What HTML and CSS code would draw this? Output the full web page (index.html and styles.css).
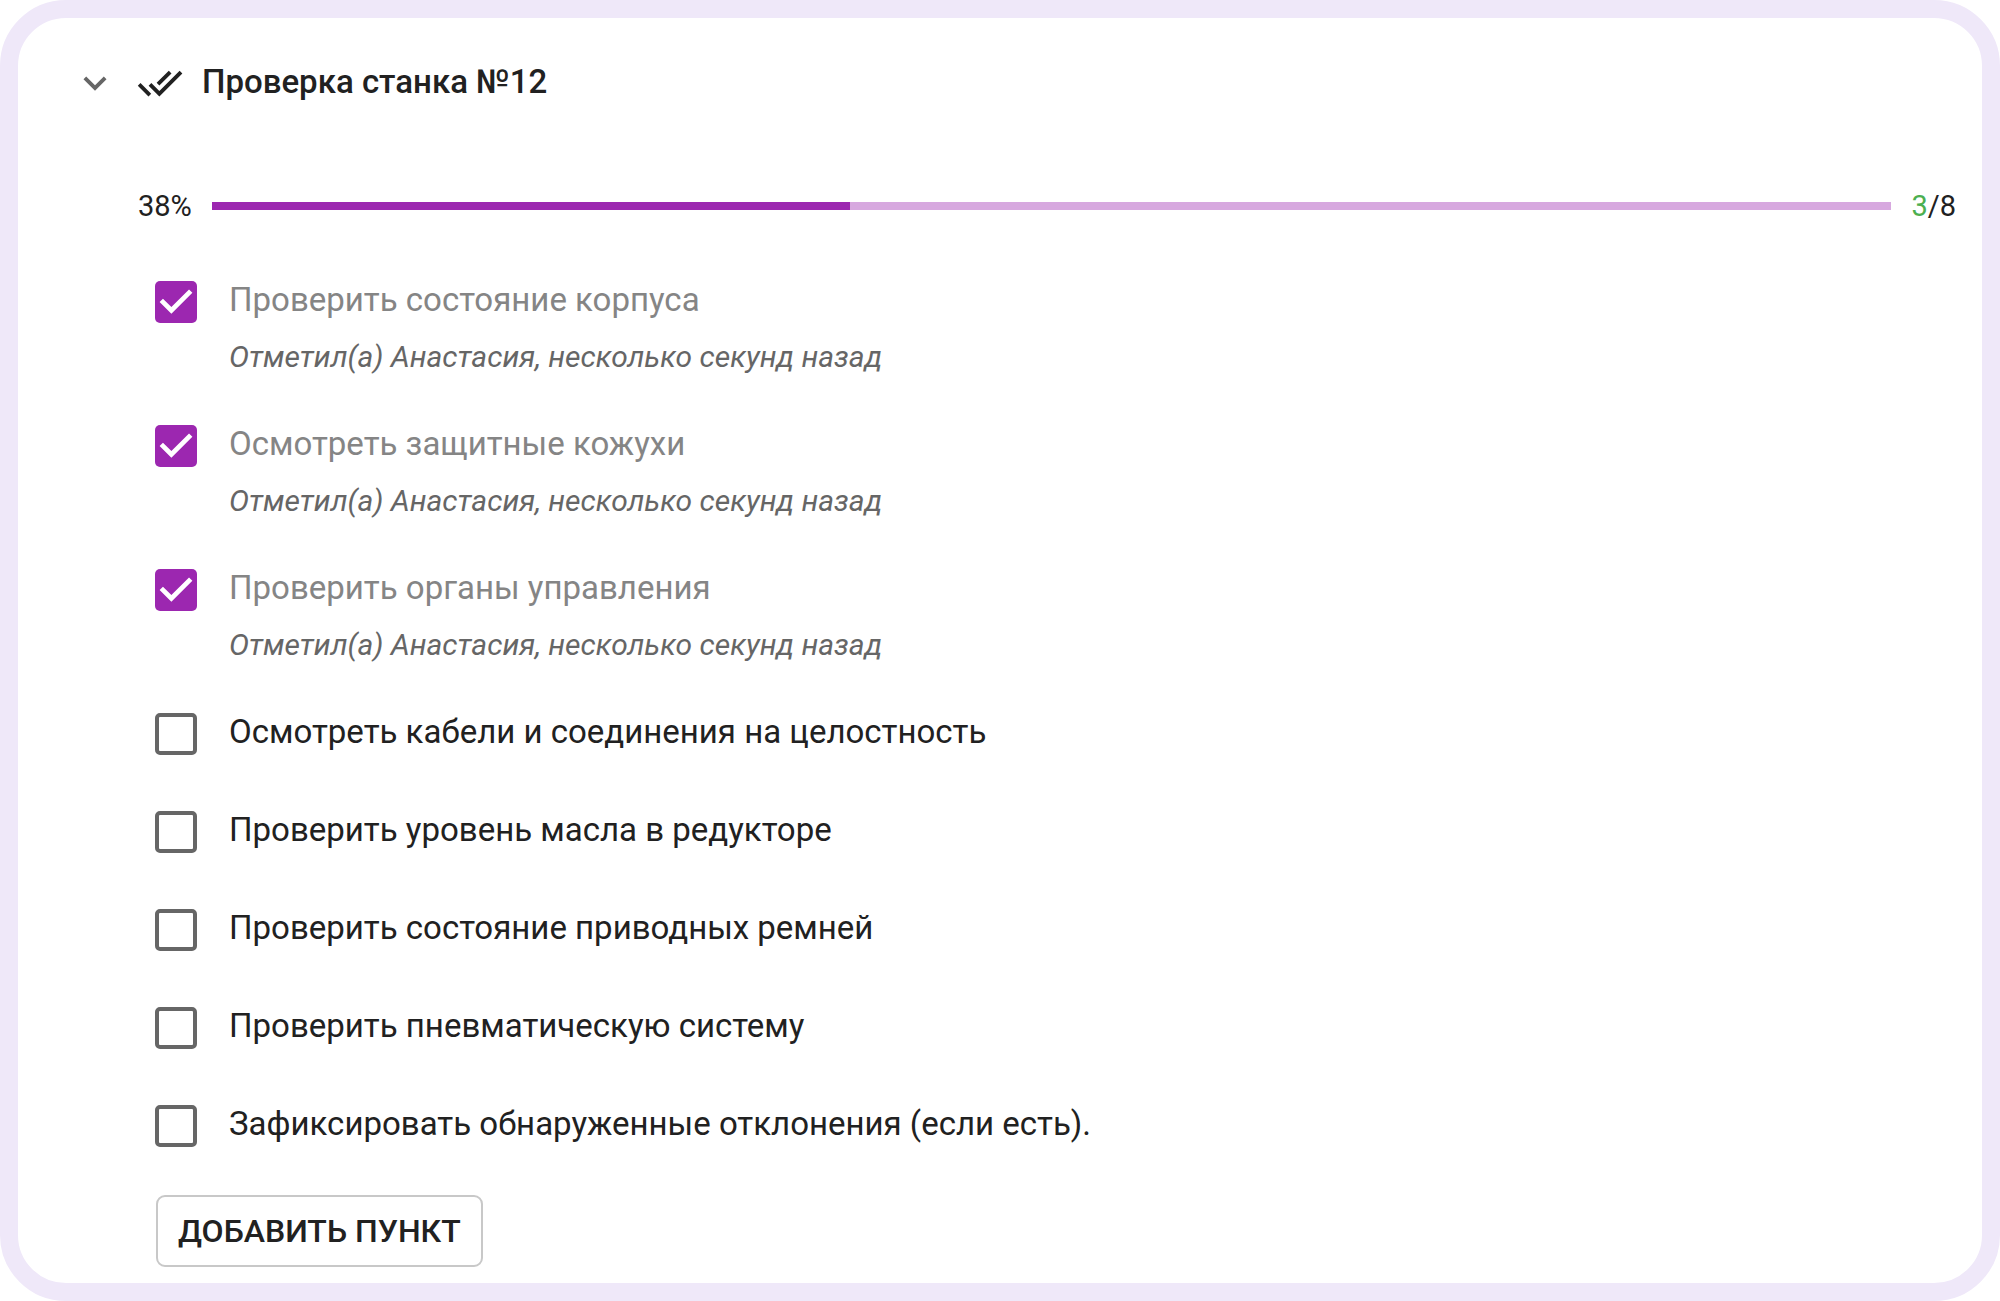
FILE: index.html
```
<!DOCTYPE html>
<html lang="ru">
<head>
<meta charset="utf-8">
<meta name="viewport" content="width=device-width, initial-scale=1">
<title>Проверка станка №12</title>
<link rel="stylesheet" href="styles.css">
</head>
<body>
<main class="card">
  <header class="card-header">
    <button class="toggle" type="button" aria-label="Свернуть" aria-expanded="true">
      <svg class="icon" viewBox="0 0 24 24" aria-hidden="true"><path d="M16.59 8.59 12 13.17 7.41 8.59 6 10l6 6 6-6z"/></svg>
    </button>
    <svg class="icon" viewBox="0 0 24 24" aria-hidden="true"><path d="m18 7-1.41-1.41-6.34 6.34 1.41 1.41L18 7zm4.24-1.41L11.66 16.17 7.48 12l-1.41 1.41L11.66 19l12-12-1.42-1.41zM.41 13.41 6 19l1.41-1.41L1.83 12 .41 13.41z"/></svg>
    <h1 class="title">Проверка станка №12</h1>
  </header>
  <section class="card-body">
    <div class="progress">
      <span class="progress-text">38%</span>
      <div class="bar" role="progressbar" aria-valuenow="38" aria-valuemin="0" aria-valuemax="100" aria-label="Выполнено">
        <div class="bar-fill" style="width: 38%"></div>
      </div>
      <span class="progress-text"><span class="done-count">3</span>/8</span>
    </div>
    <ul class="list">
      <li class="item item-done">
        <input class="check" type="checkbox" id="c1" checked>
        <div class="item-text">
          <label class="label" for="c1">Проверить состояние корпуса</label>
          <p class="note">Отметил(а) Анастасия, несколько секунд назад</p>
        </div>
      </li>
      <li class="item item-done">
        <input class="check" type="checkbox" id="c2" checked>
        <div class="item-text">
          <label class="label" for="c2">Осмотреть защитные кожухи</label>
          <p class="note">Отметил(а) Анастасия, несколько секунд назад</p>
        </div>
      </li>
      <li class="item item-done">
        <input class="check" type="checkbox" id="c3" checked>
        <div class="item-text">
          <label class="label" for="c3">Проверить органы управления</label>
          <p class="note">Отметил(а) Анастасия, несколько секунд назад</p>
        </div>
      </li>
      <li class="item">
        <input class="check" type="checkbox" id="c4">
        <label class="label" for="c4">Осмотреть кабели и соединения на целостность</label>
      </li>
      <li class="item">
        <input class="check" type="checkbox" id="c5">
        <label class="label" for="c5">Проверить уровень масла в редукторе</label>
      </li>
      <li class="item">
        <input class="check" type="checkbox" id="c6">
        <label class="label" for="c6">Проверить состояние приводных ремней</label>
      </li>
      <li class="item">
        <input class="check" type="checkbox" id="c7">
        <label class="label" for="c7">Проверить пневматическую систему</label>
      </li>
      <li class="item">
        <input class="check" type="checkbox" id="c8">
        <label class="label" for="c8">Зафиксировать обнаруженные отклонения (если есть).</label>
      </li>
    </ul>
    <button class="add" type="button">Добавить пункт</button>
  </section>
</main>
</body>
</html>
```
FILE: styles.css
```
*, *::before {
  box-sizing: border-box;
}

body {
  margin: 0;
  background: #fff;
  color: #212121;
  font-family: Roboto, "Liberation Sans", sans-serif;
}

.card {
  min-height: 100vh;
  padding: 42px 26px 16px 54px;
  border: 18px solid #efe8f9;
  border-radius: 66px;
  background: #fff;
}

.card-header {
  display: flex;
  align-items: center;
  gap: 19px;
  height: 46px;
}

.toggle {
  display: flex;
  padding: 0;
  border: 0;
  background: none;
  color: #666;
  cursor: pointer;
}

.icon {
  flex: none;
  width: 46px;
  height: 46px;
  fill: currentColor;
}

.title {
  margin: 0;
  padding-bottom: 2px;
  font-size: 33px;
  font-weight: 500;
  line-height: 42px;
}

.card-body {
  padding: 81px 0 0 66px;
}

.progress {
  display: flex;
  align-items: center;
  gap: 20px;
}

.progress-text {
  font-size: 29px;
  line-height: 38px;
}

.done-count {
  color: #4caf50;
}

.bar {
  flex: 1;
  height: 8px;
  background: #d7a8df;
}

.bar-fill {
  height: 100%;
  background: #9c27b0;
}

.list {
  margin: 56px 0 0;
  padding: 0 0 0 17px;
  list-style: none;
}

.item {
  display: flex;
  align-items: flex-start;
  gap: 32px;
  min-height: 98px;
}

.item-done {
  min-height: 144px;
}

.check {
  flex: none;
  appearance: none;
  width: 42px;
  height: 42px;
  margin: 0;
  border: 4px solid #666;
  border-radius: 5px;
  background: #fff;
  cursor: pointer;
}

.check:checked {
  border: 0;
  background: #9c27b0;
}

.check:checked::before {
  content: "";
  display: block;
  height: 100%;
  background: #fff;
  clip-path: polygon(39% 78%, 11% 50%, 19% 42%, 39% 62%, 81% 20%, 89% 28%);
}

.label {
  display: block;
  font-size: 33px;
  line-height: 38px;
}

.item-done .label {
  color: #858585;
}

.note {
  margin: 18px 0 0;
  color: #666;
  font-size: 30px;
  font-style: italic;
  line-height: 40px;
}

.add {
  margin: -8px 0 0 18px;
  padding: 14px 20px;
  border: 2px solid #c8c8c8;
  border-radius: 9px;
  background: #fff;
  color: #212121;
  font-family: inherit;
  font-size: 32px;
  font-weight: 500;
  line-height: 40px;
  text-transform: uppercase;
  cursor: pointer;
}
```
